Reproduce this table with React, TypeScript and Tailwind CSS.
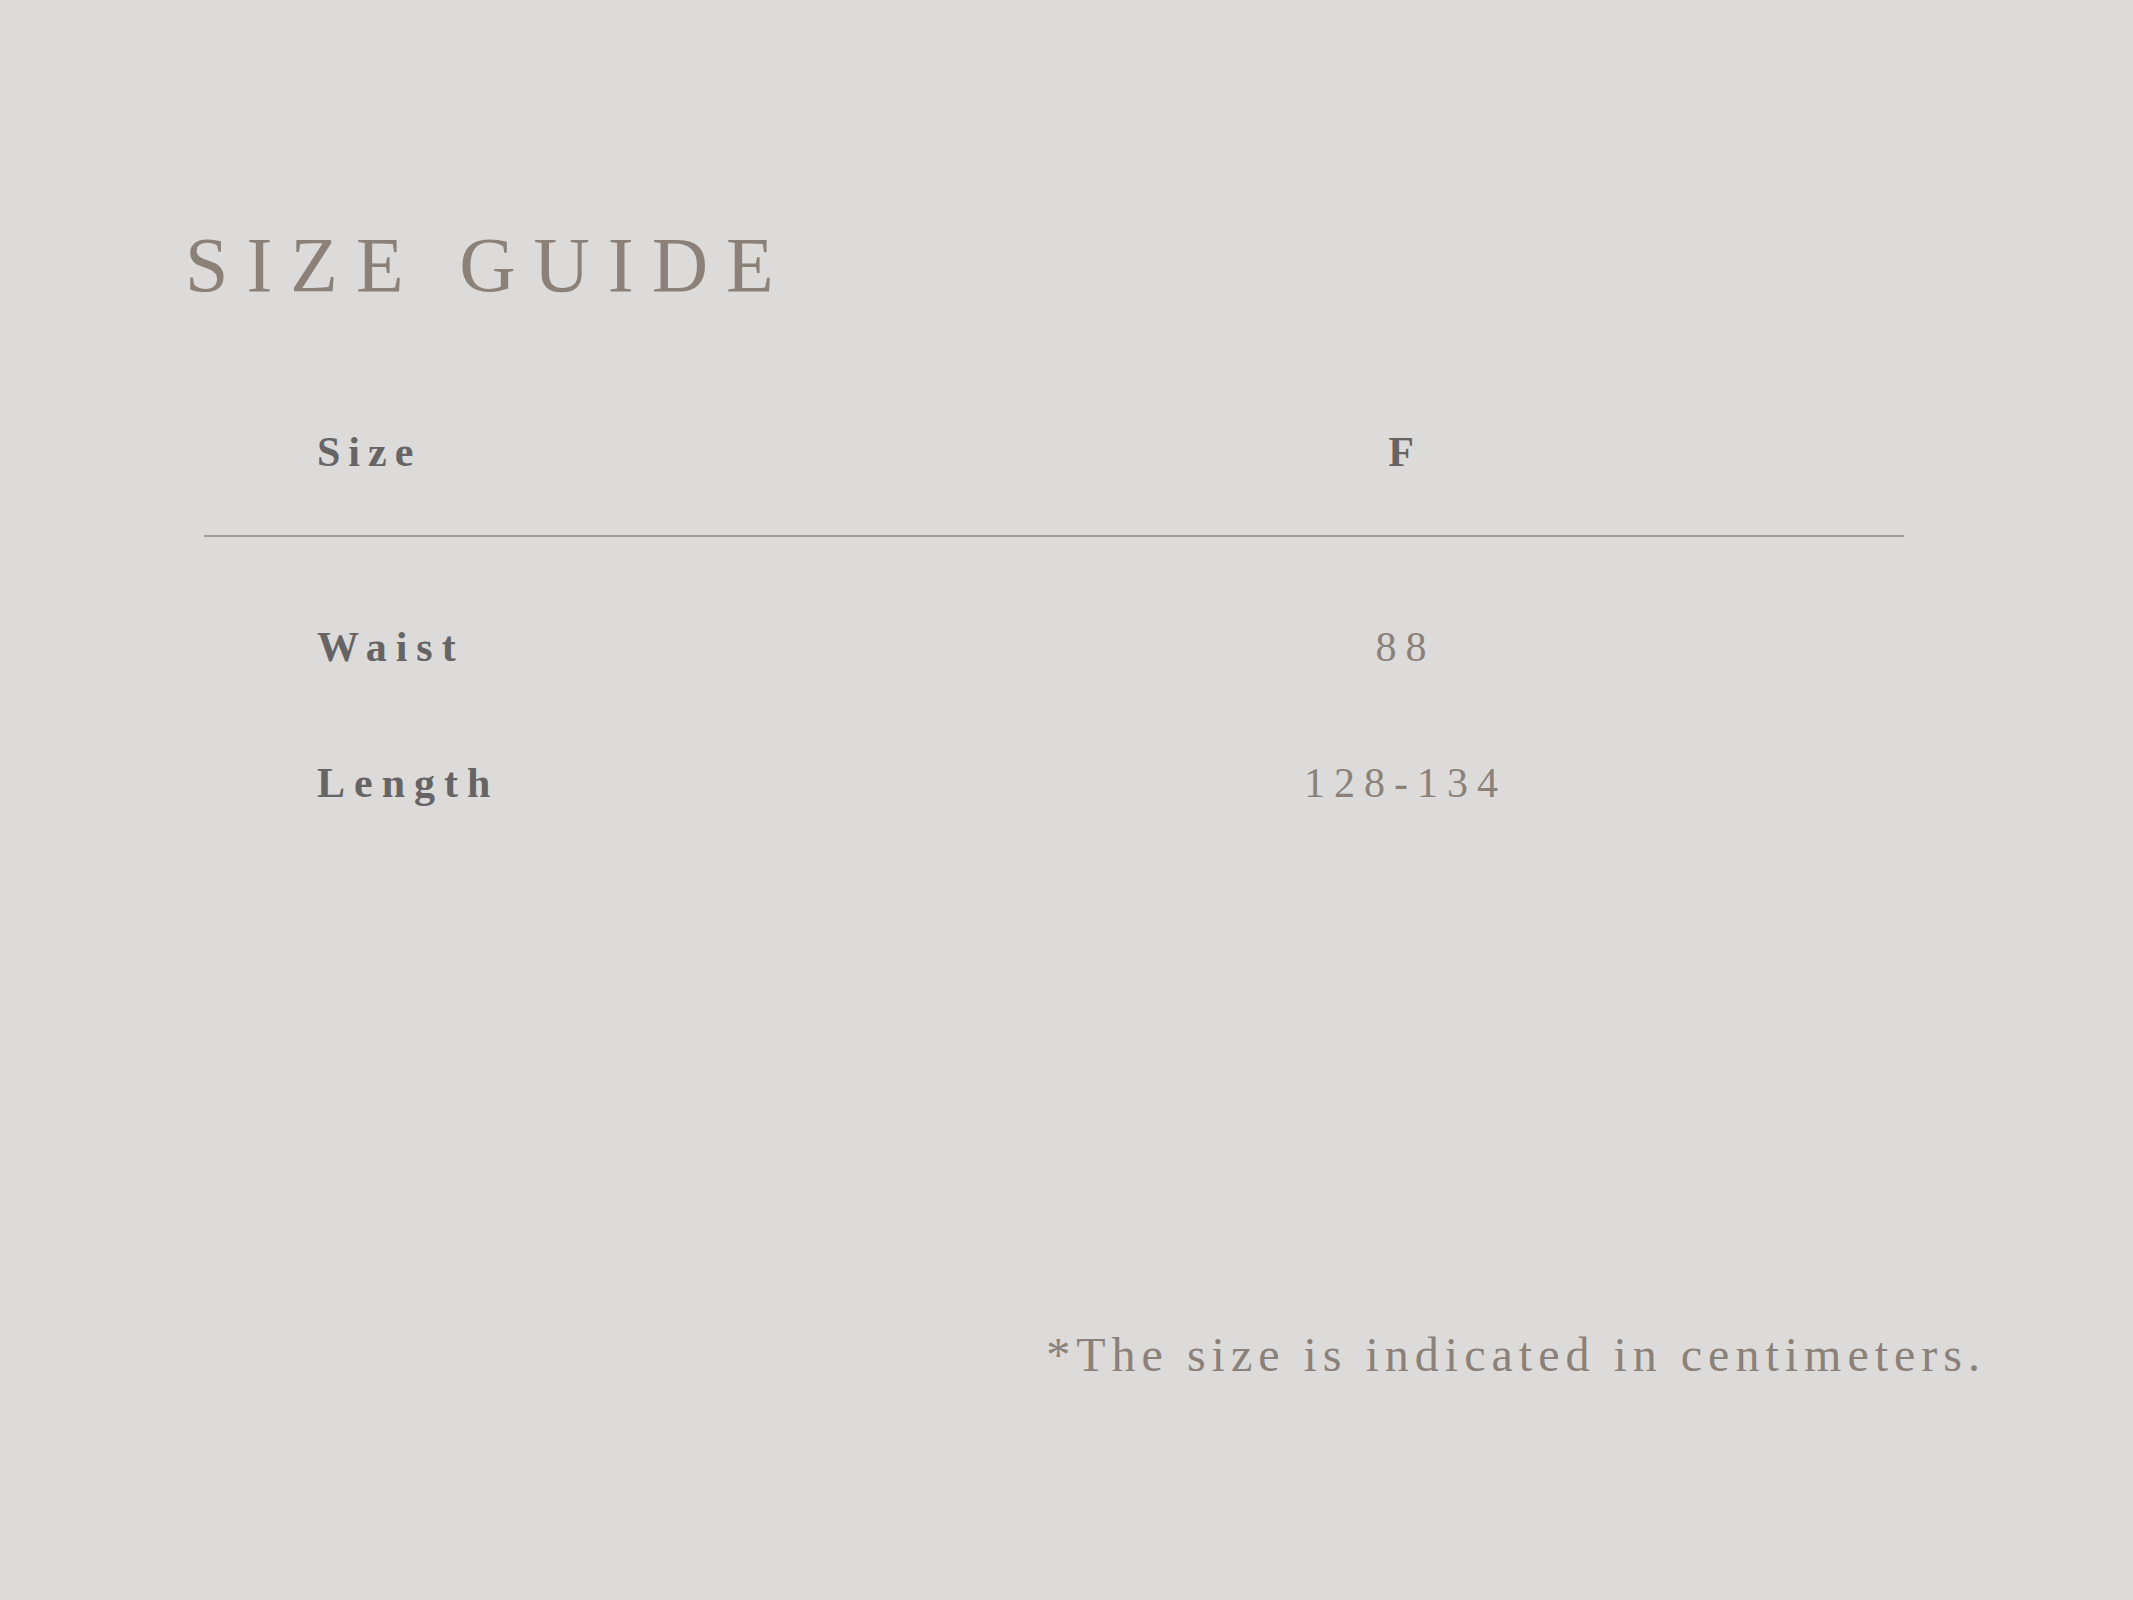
const serif = { fontFamily: '"Liberation Serif", "Times New Roman", serif' };

type Row = {
    label: string;
    value: string;
};

const rows: Row[] = [
    { label: "Waist", value: "88" },
    { label: "Length", value: "128-134" },
];

export default function App() {
    return (
        <div
            className="flex h-[1600px] w-full flex-col overflow-hidden bg-[#dcdbd9]"
            style={serif}
        >
            <h1 className="pl-[185px] pt-[226px] text-[78px] font-normal leading-none tracking-[18px] text-[#8b8179]">
                SIZE GUIDE
            </h1>

            <div className="ml-[204px] mt-[127px] w-[1700px]">
                <div className="flex pl-[113px] text-[42px] font-bold leading-none text-[#666464]">
                    <div className="w-[884px] tracking-[8px]">Size</div>
                    <div className="w-[400px] text-center">F</div>
                </div>

                <div className="mt-[62px] h-[2px] bg-[#a29a95]" />

                <div className="mt-[89px] flex flex-col gap-[94px]">
                    {rows.map((row) => (
                        <div key={row.label} className="flex pl-[113px] text-[42px] leading-none">
                            <div className="w-[884px] font-bold tracking-[9px] text-[#666464]">
                                {row.label}
                            </div>
                            <div className="w-[400px] pl-[9px] text-center tracking-[9px] text-[#8b8179]">
                                {row.value}
                            </div>
                        </div>
                    ))}
                </div>
            </div>

            <p className="mt-[527px] pr-[147px] text-right text-[48px] leading-none tracking-[6px] text-[#8b8179]">
                *The size is indicated in centimeters.
            </p>
        </div>
    );
}
